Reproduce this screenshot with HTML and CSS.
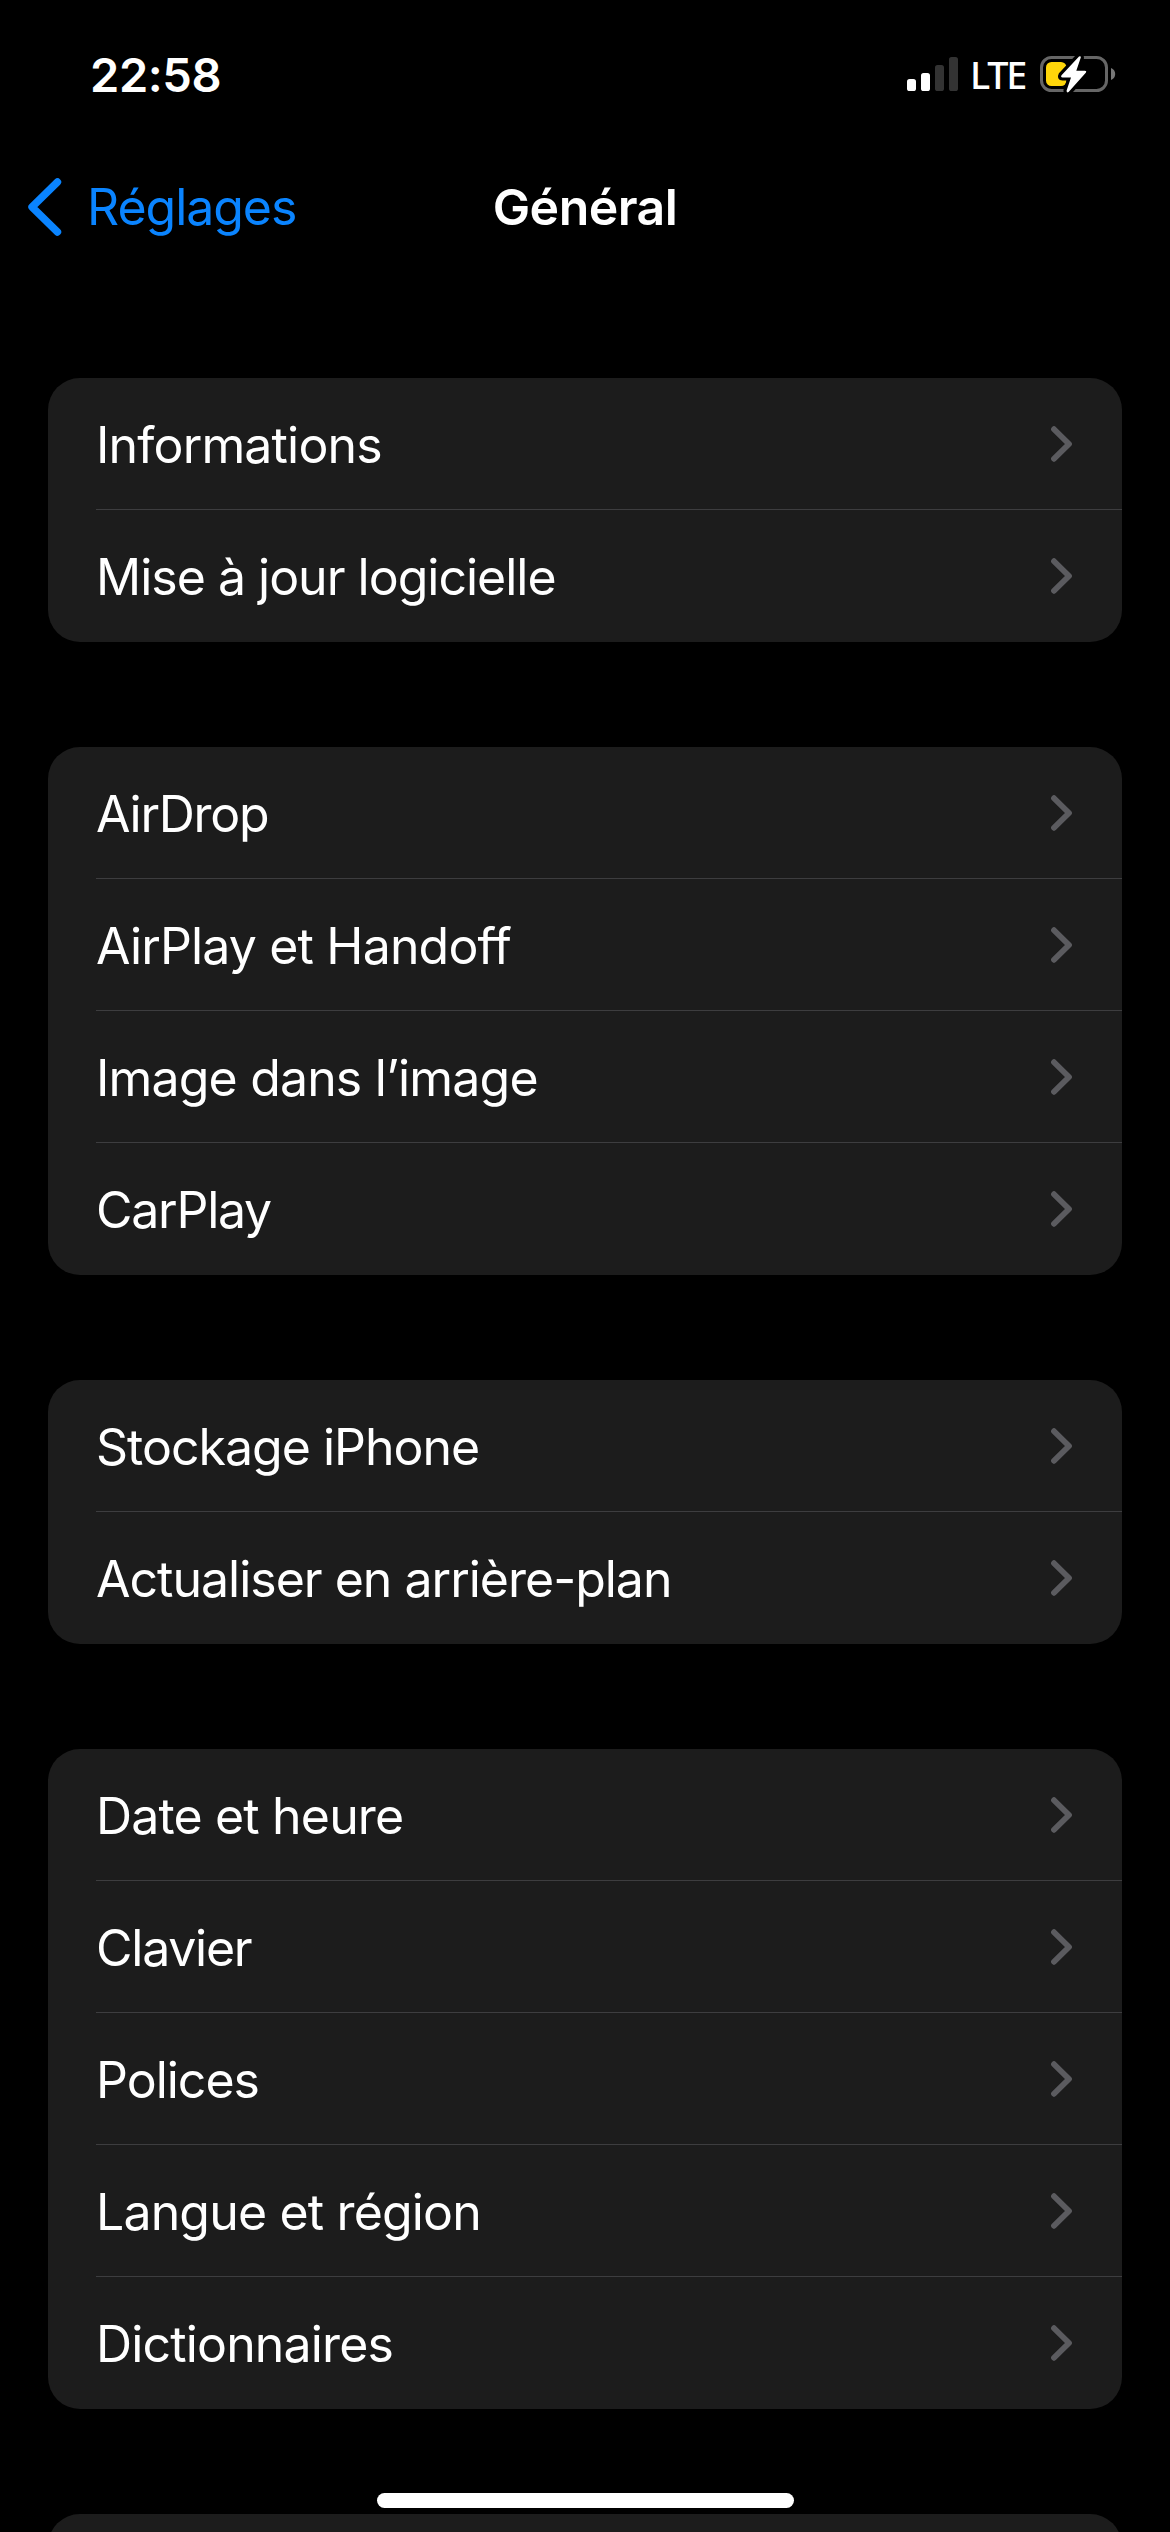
FILE: index.html
```html
<!DOCTYPE html>
<html lang="fr">
<head>
<meta charset="utf-8">
<title>Général</title>
<link rel="stylesheet" href="styles.css">
</head>
<body>
<svg class="defs" aria-hidden="true">
  <symbol id="chevron" viewBox="0 0 21 36"><path d="M3 3.2 18 18 3 32.8" fill="none" stroke="currentColor" stroke-width="5.8" stroke-linecap="round" stroke-linejoin="round"/></symbol>
</svg>
<div class="screen">
  <div class="status">
    <span class="time">22:58</span>
    <div class="indicators">
      <svg class="signal" viewBox="0 0 51 34">
        <rect x="0" y="22" width="9" height="12" rx="2.6" fill="#fff"/>
        <rect x="14" y="16" width="9" height="18" rx="2.6" fill="#fff"/>
        <rect x="28" y="8" width="9" height="26" rx="2.6" fill="#333"/>
        <rect x="42" y="0" width="9" height="34" rx="2.6" fill="#333"/>
      </svg>
      <span class="network">LTE</span>
      <svg class="battery" viewBox="0 0 75 38">
        <rect x="1.5" y="2.5" width="65" height="33" rx="10" fill="none" stroke="#666" stroke-width="3"/>
        <path d="M71 13c2.600 1 4.200 3.200 4.200 6s-1.600 5-4.200 6z" fill="#777"/>
        <rect x="6" y="7" width="20.500" height="24" rx="5.500" fill="#ffd60a"/>
        <path d="M39 1.500 21.500 20.300q-1.200 2.100 1 2.100h8.500l-4.400 13.200q-.2 2.600 2 1.400l17.200-19.200q1.200-2.100-1-2.100h-8.500L40.800 2.600q.1-2.200-1.800-1.100z" fill="#fff" stroke="#000" stroke-width="6.400" stroke-linejoin="round" paint-order="stroke"/>
      </svg>
    </div>
  </div>

  <header class="nav">
    <a class="back">
      <svg class="back-icon" viewBox="0 0 34 58"><path d="M29.500 4 4 29l25.500 25" fill="none" stroke="currentColor" stroke-width="7.400" stroke-linecap="round" stroke-linejoin="round"/></svg>
      <span>Réglages</span>
    </a>
    <h1 class="title">Général</h1>
  </header>

  <main class="list">
    <ul class="group">
      <li class="row"><div class="cell"><span class="label open">Informations</span><svg class="chevron"><use href="#chevron"/></svg></div></li>
      <li class="row"><div class="cell"><span class="label">Mise à jour logicielle</span><svg class="chevron"><use href="#chevron"/></svg></div></li>
    </ul>
    <ul class="group">
      <li class="row"><div class="cell"><span class="label tight">AirDrop</span><svg class="chevron"><use href="#chevron"/></svg></div></li>
      <li class="row"><div class="cell"><span class="label open">AirPlay et Handoff</span><svg class="chevron"><use href="#chevron"/></svg></div></li>
      <li class="row"><div class="cell"><span class="label open">Image dans l’image</span><svg class="chevron"><use href="#chevron"/></svg></div></li>
      <li class="row"><div class="cell"><span class="label tight">CarPlay</span><svg class="chevron"><use href="#chevron"/></svg></div></li>
    </ul>
    <ul class="group">
      <li class="row"><div class="cell"><span class="label">Stockage iPhone</span><svg class="chevron"><use href="#chevron"/></svg></div></li>
      <li class="row"><div class="cell"><span class="label">Actualiser en arrière-plan</span><svg class="chevron"><use href="#chevron"/></svg></div></li>
    </ul>
    <ul class="group">
      <li class="row"><div class="cell"><span class="label open">Date et heure</span><svg class="chevron"><use href="#chevron"/></svg></div></li>
      <li class="row"><div class="cell"><span class="label tight">Clavier</span><svg class="chevron"><use href="#chevron"/></svg></div></li>
      <li class="row"><div class="cell"><span class="label">Polices</span><svg class="chevron"><use href="#chevron"/></svg></div></li>
      <li class="row"><div class="cell"><span class="label open">Langue et région</span><svg class="chevron"><use href="#chevron"/></svg></div></li>
      <li class="row"><div class="cell"><span class="label open">Dictionnaires</span><svg class="chevron"><use href="#chevron"/></svg></div></li>
    </ul>
    <ul class="group">
      <li class="row"></li>
    </ul>
  </main>
  <div class="home-indicator"></div>
</div>
</body>
</html>
```
FILE: styles.css
```css
* { box-sizing: border-box; }

body {
  margin: 0;
  background: #000;
  color: #fff;
  font-family: Inter, "Liberation Sans", sans-serif;
  font-size: 50px;
}

.defs { display: none; }

.screen {
  position: relative;
  width: 1170px;
  height: 2532px;
  overflow: hidden;
  background: #000;
}

/* Status bar */
.status {
  display: flex;
  align-items: center;
  justify-content: space-between;
  height: 148px;
  padding: 0 55px 0 90px;
}

.time {
  font-size: 47px;
  font-weight: 600;
  letter-spacing: -0.4px;
}

.indicators {
  display: flex;
  align-items: center;
  gap: 12px;
}

.signal { width: 51px; height: 34px; }

.network {
  width: 58px;
  font-family: "Noto Sans", sans-serif;
  font-size: 37.8px;
  font-weight: 500;
  letter-spacing: -2.2px;
  white-space: nowrap;
}

.battery { width: 75px; height: 38px; overflow: visible; }

/* Navigation bar */
.nav {
  display: grid;
  grid-template-columns: 1fr auto 1fr;
  align-items: center;
  height: 117px;
  padding: 0 28px;
}

.back {
  display: flex;
  align-items: center;
  gap: 25px;
  color: #0a84ff;
  letter-spacing: -1.04px;
}

.back-icon { width: 34px; height: 58px; }

.title {
  margin: 0;
  font-size: 50px;
  font-weight: 600;
  letter-spacing: -0.54px;
}

/* Grouped list */
.list {
  display: flex;
  flex-direction: column;
  gap: 105px;
  padding: 113px 48px 0;
}

.group {
  margin: 0;
  padding: 0;
  list-style: none;
  background: #1c1c1c;
  border-radius: 32px;
}

.row {
  height: 132px;
  padding-left: 48px;
}

.cell {
  display: flex;
  align-items: center;
  justify-content: space-between;
  height: 132px;
  padding: 1px 50px 0 0;
  border-bottom: 1px solid #3d3d3f;
}

.row:last-child .cell { border-bottom-color: transparent; }

.label {
  padding-top: 2px;
  letter-spacing: -1px;
}

.label.open { letter-spacing: -0.84px; }
.label.tight { letter-spacing: -1.25px; }

.chevron {
  width: 21px;
  height: 36px;
  color: #5b5b5f;
}

.home-indicator {
  position: absolute;
  left: 377px;
  bottom: 24px;
  width: 417px;
  height: 15px;
  border-radius: 8px;
  background: #fff;
}
```
